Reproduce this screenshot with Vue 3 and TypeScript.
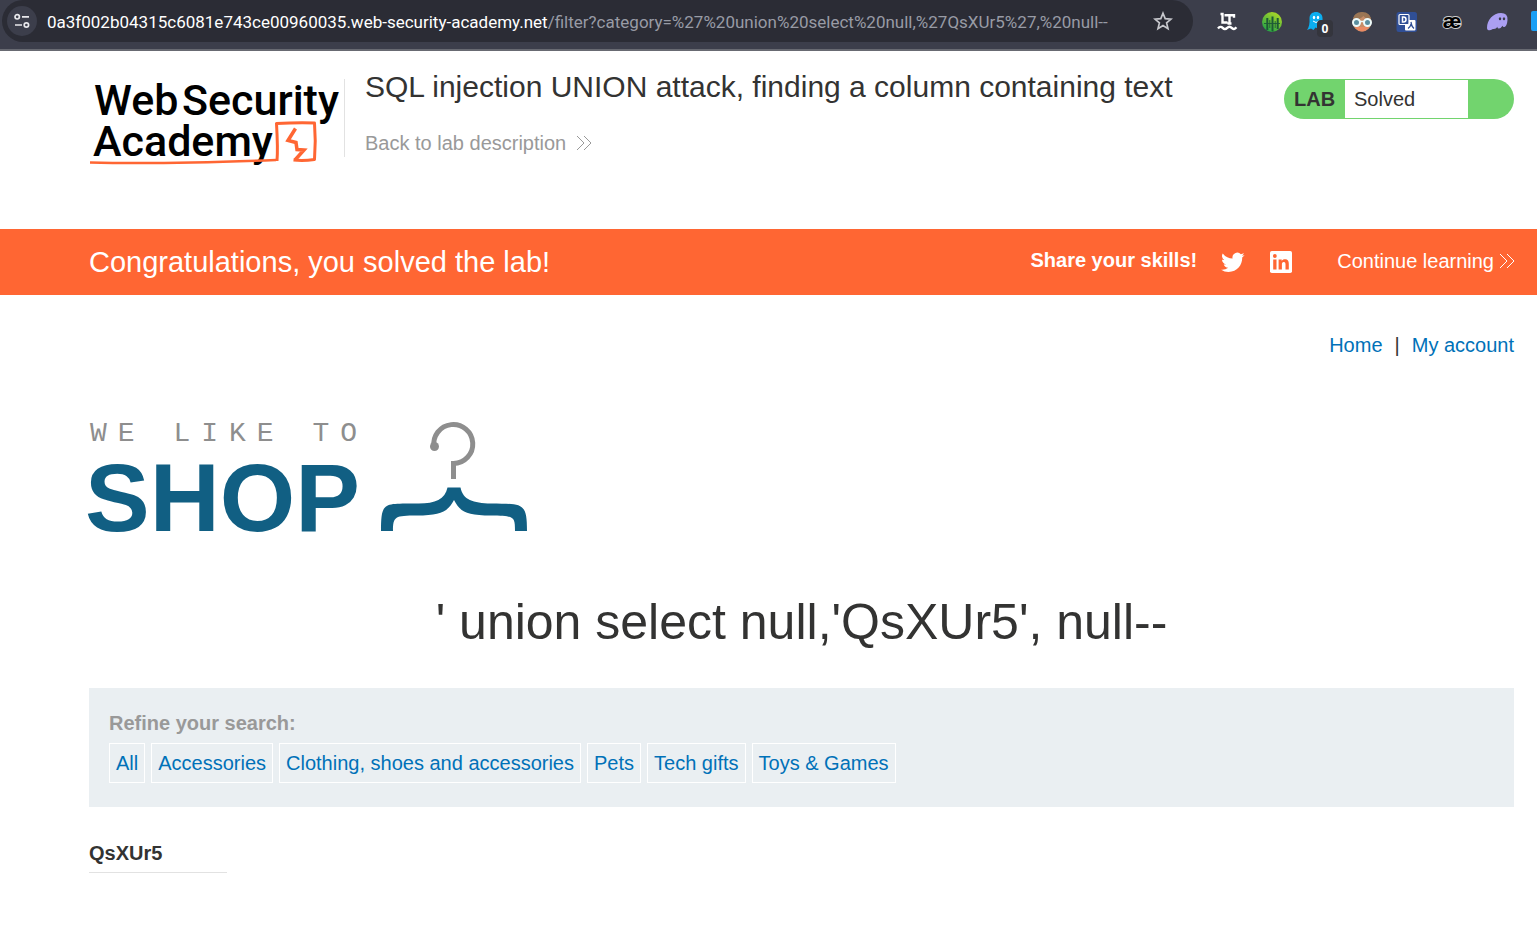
<script setup lang="ts">
import { ref } from 'vue'

const host = '0a3f002b04315c6081e743ce00960035.web-security-academy.net'
const path = '/filter?category=%27%20union%20select%20null,%27QsXUr5%27,%20null--'
const heading = "' union select null,'QsXUr5', null--"
const categories: string[] = ['All', 'Accessories', 'Clothing, shoes and accessories', 'Pets', 'Tech gifts', 'Toys & Games']
const products = ref<string[]>(['QsXUr5'])
</script>

<template>
  <div class="window">
    <div class="toolbar">
      <div class="omnibox">
        <button class="site-info" type="button" aria-label="View site information">
          <svg width="16" height="16" viewBox="0 0 16 16" fill="none" stroke="#e8e8ec" stroke-width="1.7">
            <circle cx="3.2" cy="3.8" r="2.2" /><path d="M8 3.8h7M1 12h7" /><circle cx="12.4" cy="12" r="2.2" />
          </svg>
        </button>
        <div class="address" role="textbox" aria-label="Address" contenteditable="true" spellcheck="false"><span class="host">{{ host }}</span><span class="path">{{ path }}</span></div>
        <button class="star" type="button" aria-label="Bookmark this page">
          <svg width="20" height="20" viewBox="0 0 20 20" fill="none" stroke="#c6c7cc" stroke-width="1.7" stroke-linejoin="miter">
            <path d="M10 2.2l2.2 5.4 5.9.5-4.5 3.8 1.4 5.7-5-3.1-5 3.1 1.4-5.7L1.9 8.1l5.9-.5z" />
          </svg>
        </button>
      </div>
      <div class="extensions">
        <button type="button" aria-label="Language tool">
          <svg width="24" height="24" viewBox="0 0 24 24" fill="none" stroke="#fff" stroke-width="2.4">
            <path d="M5.500 4h2v8.500h5M9.500 5.200h9.500v2.500M14.500 5v8.800M12.500 13.500h4" /><path d="M3 18.500q2.500-3 4.700-.6t4.500 0 4.500 0 4.700-.6" />
          </svg>
        </button>
        <button type="button" aria-label="Forest">
          <svg width="24" height="24" viewBox="0 0 24 24">
            <defs><linearGradient id="leaf" x1="0" y1="1" x2="0.6" y2="0"><stop offset="0" stop-color="#0f9a4c" /><stop offset="1" stop-color="#a5d529" /></linearGradient></defs>
            <circle cx="12" cy="12" r="10" fill="url(#leaf)" />
            <path d="M7.300 8v12M12.500 6.500v15M17.700 8v11" stroke="#1d5a35" stroke-width="2" fill="none" />
            <path d="M4 13.500h16M9.800 10v8M15.200 11v7" stroke="#1d5a35" stroke-width="0.9" fill="none" />
          </svg>
        </button>
        <button class="badged" type="button" aria-label="Tracker blocker, 0 blocked">
          <svg width="24" height="24" viewBox="0 0 24 24">
            <path d="M4.500 8.500C4.500 4 7.500 2 11 2s6.500 2.500 6.500 6v9l-3-.5-1.500 2-2.500-1-2 2.500-2.500-1.500L2 20q3-4 2.500-11.500z" fill="#0caeef" />
            <ellipse cx="9" cy="7.500" rx="1.200" ry="1.700" fill="#fff" /><ellipse cx="13" cy="7.500" rx="1.200" ry="1.700" fill="#fff" /><path d="M8 11q3 3 6 0" stroke="#fff" fill="none" />
          </svg>
          <span class="badge">0</span>
        </button>
        <button type="button" aria-label="Profile with glasses">
          <svg width="24" height="24" viewBox="0 0 24 24">
            <circle cx="12" cy="12" r="9.500" fill="#c78d68" /><path d="M2.500 11q1-9 9.500-9t9.500 9q-5-1-8-5-4 4-11 5z" fill="#9b7655" />
            <path d="M5 17h14q-3 4.500-7 4.500T5 17z" fill="#ea8a63" />
            <circle cx="6.500" cy="12.500" r="3.500" fill="#5b8fa0" stroke="#eefbfb" stroke-width="2" /><circle cx="17.500" cy="12.500" r="3.500" fill="#5b8fa0" stroke="#eefbfb" stroke-width="2" />
            <path d="M10 11.500h4" stroke="#eefbfb" stroke-width="1.500" />
          </svg>
        </button>
        <button type="button" aria-label="Translate">
          <svg width="24" height="24" viewBox="0 0 24 24" fill="none" stroke-width="1.500">
            <rect x="1.500" y="2" width="20.500" height="20" rx="2.500" fill="#304f96" />
            <rect x="10" y="10" width="10.500" height="10.500" rx="1" fill="#fff" /><path d="M16 12l.5 2.500M16 14q-.5 3-3 4.500M16.500 14.500q.5 2.500 2.500 4" stroke="#304f96" stroke-width="1.300" />
            <rect x="4" y="4.500" width="10" height="10" rx="1" fill="#304f96" stroke="#fff" stroke-width="1.200" /><path d="M7.500 7v5h1q2.500 0 2.500-2.500T8.500 7z" stroke="#fff" />
          </svg>
        </button>
        <button type="button" aria-label="Phonetics">
          <svg width="24" height="24" viewBox="0 0 24 24"><text x="12" y="18" text-anchor="middle" class="ae">æ</text></svg>
        </button>
        <button type="button" aria-label="Ghost">
          <svg width="24" height="24" viewBox="0 0 24 24">
            <path d="M2 18C2 10 8 3 16 3q7 0 6.500 7-.5 6-3 7-1.500.5-2-1.200-2 3.200-4 2.700-1.400-.4-1-1.800-2 3-4.700 2.200Q5 21 3 20q-1-.5-1-2z" fill="#ab9ff2" />
            <ellipse cx="15" cy="8.700" rx="1.200" ry="1.500" fill="#3c3e4b" /><ellipse cx="19" cy="8.700" rx="1.200" ry="1.500" fill="#3c3e4b" />
          </svg>
        </button>
        <button type="button" aria-label="More">
          <svg width="24" height="24" viewBox="0 0 24 24"><rect x="1" y="1" width="22" height="20" rx="2" fill="#1a9ff5" /></svg>
        </button>
      </div>
    </div>

    <header class="lab-header">
      <a class="logo" href="#" aria-label="Web Security Academy">
        <svg width="255" height="90" viewBox="0 0 255 90">
          <text x="5" y="36" class="logo-text">Web</text>
          <text x="93" y="36" class="logo-text">Security</text>
          <text x="4" y="77" class="logo-text">Academy</text>
          <g fill="none" stroke="#ff6633" stroke-linejoin="round">
            <path d="M1 83.500q70 2 186-2.500" stroke-width="2.500" />
            <path d="M188 82q1-12-.5-37.500 20-1 38-.5 1.500 18 0 36.500-11 1.500-21 .5" stroke-width="3" />
            <path d="M206.500 49.500l-7.500 12 8 2 1 7 7 .5-9 10" stroke-width="3.500" stroke-linejoin="miter" />
          </g>
        </svg>
      </a>
      <div class="title">
        <h2>SQL injection UNION attack, finding a column containing text</h2>
        <a class="back" href="#">Back to lab description
          <svg width="16" height="16" viewBox="0 0 16 16" fill="none" stroke="currentColor"><path d="M1 1l7 7-7 7M8 1l7 7-7 7" /></svg>
        </a>
      </div>
      <div class="status"><b>LAB</b><span>Solved</span></div>
    </header>

    <section class="banner">
      <h3>Congratulations, you solved the lab!</h3>
      <strong>Share your skills!</strong>
      <a class="social" href="#" aria-label="Share on Twitter">
        <svg width="24" height="24" viewBox="0 0 24 24" fill="#fff"><path d="M23.600 4.900a9.700 9.700 0 0 1-2.800.8 4.900 4.900 0 0 0 2.100-2.700 9.700 9.700 0 0 1-3 1.200 4.850 4.850 0 0 0-8.300 4.400A13.700 13.700 0 0 1 1.700 3.500a4.850 4.850 0 0 0 1.500 6.500 4.800 4.800 0 0 1-2.200-.6c0 2.300 1.600 4.300 3.900 4.800a4.900 4.900 0 0 1-2.200.1 4.850 4.850 0 0 0 4.500 3.400A9.700 9.700 0 0 1 .1 19.700a13.700 13.700 0 0 0 7.400 2.200c9 0 14-7.500 13.700-14.500a9.800 9.800 0 0 0 2.400-2.500z" /></svg>
      </a>
      <a class="social" href="#" aria-label="Share on LinkedIn">
        <svg width="24" height="24" viewBox="0 0 24 24">
          <rect x="1" y="1" width="22" height="22" rx="1.800" fill="#fff" />
          <path d="M4.200 9.500h3.300v10H4.200zM9.600 9.500h3.100v1.400c.6-1 1.700-1.700 3.200-1.700 3 0 3.900 1.800 3.900 4.700v5.600h-3.300v-5c0-1.400-.2-2.600-1.700-2.600s-1.900 1.200-1.900 2.600v5H9.600z" fill="#ff6633" /><circle cx="5.850" cy="6" r="1.900" fill="#ff6633" />
        </svg>
      </a>
      <a class="continue" href="#">Continue learning
        <svg width="16" height="16" viewBox="0 0 16 16" fill="none" stroke="currentColor"><path d="M1 1l7 7-7 7M8 1l7 7-7 7" /></svg>
      </a>
    </section>

    <main>
      <nav><a href="#">Home</a><span>|</span><a href="#">My account</a></nav>
      <svg class="shop" width="440" height="115" viewBox="0 0 440 115" role="img" aria-label="We like to shop">
        <text x="1" y="21" class="tagline">WE LIKE TO</text>
        <text x="-4" y="111" class="shop-text">SHOP</text>
        <g fill="none">
          <path d="M345 27a19.500 19.500 0 1 1 19.500 16.500V59" stroke="#8e8e8e" stroke-width="5" />
          <circle cx="345.500" cy="26.500" r="4.500" fill="#8e8e8e" />
          <path d="M292 111c0-30 3-27 35-27.500C345 84 356 80 358.500 67.500h13C374 80 384 83 402 83.500c32 .5 36-1 36 27.500h-12c0-15-1-15-24-15.500-25 0-31-4-37-15.500-6 11.500-13 15.500-37 15.500-22 0-24 1-24 15.500z" fill="#115f83" />
        </g>
      </svg>
      <h1>{{ heading }}</h1>
      <section class="filters">
        <h4 id="refine">Refine your search:</h4>
        <div class="tags" role="group" aria-labelledby="refine"><a v-for="category in categories" :key="category" href="#">{{ category }}</a></div>
      </section>
      <table>
        <tbody>
          <tr v-for="product in products" :key="product"><th scope="row">{{ product }}</th></tr>
        </tbody>
      </table>
    </main>
  </div>
</template>

<style>
body {
  margin: 0;
  background: #fff;
}
</style>

<style scoped>
.window {
  color: #333332;
  font: 20px/24px "Liberation Sans", Arial, sans-serif;
  overflow: hidden;
}
a {
  color: #0071b8;
  text-decoration: none;
}
svg {
  display: block;
  flex: none;
}
button {
  padding: 0;
  border: 0;
  background: none;
}
h1, h2, h3, h4 {
  margin: 0;
  font-weight: normal;
}
.toolbar {
  display: flex;
  height: 49px;
  padding-left: 2px;
  background: #3c3e4b;
  border-bottom: 2px solid #686a72;
}
.omnibox {
  flex: 1;
  min-width: 0;
  height: 42px;
  display: flex;
  align-items: center;
  gap: 10px;
  padding: 0 20px 0 5px;
  box-sizing: border-box;
  background: #2b2c35;
  border-radius: 21px;
}
.site-info {
  width: 30px;
  height: 30px;
  flex: none;
  display: grid;
  place-items: center;
  border-radius: 50%;
  background: #3c3e4b;
}
.address {
  flex: 1;
  min-width: 0;
  overflow: hidden;
  white-space: nowrap;
  outline: none;
  padding-top: 2px;
  font-family: Roboto, "Open Sans", sans-serif;
  font-size: 17px;
}
.host {
  color: #fff;
}
.path {
  color: #989ba5;
}
.extensions {
  flex: 0 0 344px;
  height: 44px;
  box-sizing: border-box;
  display: flex;
  align-items: center;
  gap: 21px;
  padding-left: 22px;
  overflow: hidden;
}
.extensions button {
  flex: none;
  width: 24px;
}
.extensions svg {
  overflow: visible;
}
.badged {
  position: relative;
}
.badge {
  position: absolute;
  left: 12px;
  top: 10px;
  width: 16px;
  height: 17px;
  border-radius: 4px;
  background: #34353d;
  color: #fff;
  font: bold 12px/17px "Open Sans", sans-serif;
}
.ae {
  font: bold 21px "Liberation Sans", sans-serif;
  fill: #000;
  stroke: #ccc;
  stroke-width: 2px;
  paint-order: stroke;
}
.lab-header {
  display: flex;
  align-items: flex-start;
  height: 150px;
  padding: 28px 23px 0 89px;
}
.logo {
  height: 78px;
  border-right: 1px solid #e2e2e2;
}
.logo-text {
  font: 500 43px Roboto, sans-serif;
  fill: #000;
}
.title {
  flex: 1;
  padding-left: 20px;
}
.title h2 {
  margin-top: -8px;
  font-size: 30px;
  line-height: 32px;
}
.back {
  display: inline-flex;
  align-items: center;
  gap: 10px;
  margin-top: 28px;
  color: #999;
}
.status {
  display: flex;
  width: 230px;
  height: 40px;
  box-sizing: border-box;
  padding: 1px 46px 1px 0;
  border-radius: 20px;
  background: #72d46e;
  line-height: 38px;
}
.status b {
  width: 51px;
  padding-left: 10px;
}
.status span {
  flex: 1;
  padding-left: 9px;
  background: #fff;
}
.banner {
  display: flex;
  align-items: center;
  height: 66px;
  padding: 0 22px 0 89px;
  background: #ff6633;
  color: #fff;
}
.banner h3 {
  flex: 1;
  font-size: 29px;
  line-height: 32px;
}
.banner strong {
  padding-bottom: 4px;
}
.social {
  margin-left: 24px;
}
.continue {
  display: flex;
  align-items: center;
  gap: 5px;
  margin-left: 44px;
  padding-bottom: 2px;
  color: #fff;
}
main {
  padding: 38px 23px 0 89px;
}
nav {
  display: flex;
  justify-content: flex-end;
  gap: 12px;
}
.shop {
  margin-top: 63px;
}
.tagline {
  font: 28px "Liberation Mono", monospace;
  letter-spacing: 11px;
  fill: #8e8e8e;
}
.shop-text {
  font: bold 97px "Liberation Sans", Arial, sans-serif;
  fill: #115f83;
}
.shop, .logo svg {
  overflow: visible;
}
h1 {
  margin: 57px 0 36px;
  text-align: center;
  font-size: 50px;
  line-height: 60px;
}
.filters {
  padding: 23px 20px 24px;
  background: #eaeff2;
}
.filters h4 {
  font-weight: bold;
  color: #999;
}
.tags {
  display: flex;
  flex-wrap: wrap;
  gap: 6px;
  margin-top: 8px;
}
.tags a {
  padding: 0 6px;
  border: 1px solid #fff;
  line-height: 38px;
}
table {
  margin-top: 28px;
  border-collapse: collapse;
}
th {
  width: 138px;
  padding: 6px 0 7px;
  border-bottom: 1px solid #e2e2e2;
  text-align: left;
}
</style>
